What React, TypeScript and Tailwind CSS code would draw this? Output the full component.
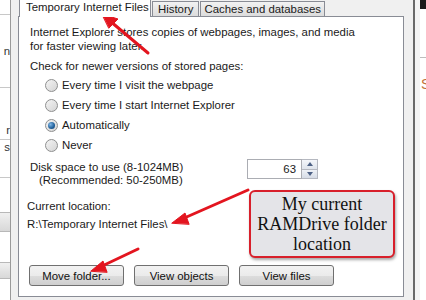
import React from "react";

const ui = { fontFamily: '"Liberation Sans", Arial, sans-serif' };

function Radio({ label, checked }: { label: string; checked?: boolean }) {
  return (
    <div className="h-[20px] flex items-center pl-[15px] gap-[4px]">
      <span className="w-[13px] h-[13px] rounded-full border border-[#8e8f8f] bg-gradient-to-br from-[#f4f4f4] to-[#d4d4d4] flex items-center justify-center">
        {checked && (
          <span className="w-[7px] h-[7px] rounded-full bg-[radial-gradient(circle_at_35%_35%,#7fb6e6,#1f5f99_60%,#173f6b)]" />
        )}
      </span>
      <span>{label}</span>
    </div>
  );
}

function Btn({ children }: { children: React.ReactNode }) {
  return (
    <div className="w-[95px] h-[21px] rounded-[3px] border border-[#707070] bg-[linear-gradient(#f2f2f2_0%,#ebebeb_50%,#dddddd_51%,#cfcfcf_100%)] flex items-center justify-center text-[#111]">
      {children}
    </div>
  );
}

export default function App() {
  return (
    <div className="w-[426px] h-[300px] bg-[#f0f0f0] flex relative overflow-hidden text-[11.4px] leading-[14px] text-[#1a1a1a] whitespace-nowrap" style={ui}>
      {/* window behind, left edge */}
      <div className="w-[11px] h-full bg-white border-r border-[#9a9a9a] flex flex-col text-[#333] overflow-hidden">
        <div className="h-[15px] border-b border-[#c8c8c8]" />
        <div className="h-[73px] border-b border-[#c8c8c8] flex items-center justify-end">n</div>
        <div className="h-[52px] border-b border-[#c8c8c8] flex items-end justify-end pb-[2px]">r</div>
        <div className="h-[38px] border-b border-[#c8c8c8] flex items-start justify-end">s</div>
        <div className="h-[34px]" />
        <div className="h-[20px] bg-gradient-to-b from-[#f0f0f0] to-[#d8d8d8] border-y border-[#b8b8b8]" />
        <div className="h-[30px]" />
        <div className="h-[17px] bg-gradient-to-b from-[#f0f0f0] to-[#d8d8d8] border-y border-[#b8b8b8]" />
      </div>

      {/* dialog body */}
      <div className="w-[402px] h-full pl-[7px] pr-[9px] flex flex-col">
        <div className="h-[16px] flex items-end pl-[1px]">
          <div className="w-[132px] h-[20px] bg-white border border-b-0 border-[#898c95] flex items-end pl-[6px] pb-[3px] -mb-[1px] relative z-10">
            Temporary Internet Files
          </div>
          <div className="h-[15px] px-[5px] ml-[1px] border border-b-0 border-[#898c95] bg-gradient-to-b from-[#f2f2f2] to-[#dcdcdc] flex items-center">
            History
          </div>
          <div className="h-[15px] px-[3px] ml-[1px] border border-b-0 border-[#898c95] bg-gradient-to-b from-[#f2f2f2] to-[#dcdcdc] flex items-center">
            Caches and databases
          </div>
        </div>

        <div className="h-[281px] bg-white border border-[#898c95] flex flex-col pt-[8px] pl-[11px]">
          <p>Internet Explorer stores copies of webpages, images, and media<br />for faster viewing later.</p>
          <p className="mt-[6px]">Check for newer versions of stored pages:</p>
          <div className="mt-[2px] flex flex-col">
            <Radio label="Every time I visit the webpage" />
            <Radio label="Every time I start Internet Explorer" />
            <Radio label="Automatically" checked />
            <Radio label="Never" />
          </div>
          <div className="mt-[5px] flex items-start">
            <div className="w-[217px]">
              <p>Disk space to use (8-1024MB)</p>
              <p className="pl-[9px] -mt-[1px]">(Recommended: 50-250MB)</p>
            </div>
            <div className="flex -mt-[1px]">
              <div className="w-[55px] h-[20px] border border-[#abadb3] bg-white flex items-center justify-end pr-[5px]">63</div>
              <div className="w-[16px] h-[20px] flex flex-col border border-l-0 border-[#b5b8c0]">
                <div className="flex-1 bg-gradient-to-b from-[#f4f6fa] to-[#dfe4ec] border-b border-[#b5b8c0] flex items-center justify-center">
                  <span className="w-0 h-0 border-x-[3px] border-x-transparent border-b-[4px] border-b-[#4d6185]" />
                </div>
                <div className="flex-1 bg-gradient-to-b from-[#eef1f6] to-[#d6dce6] flex items-center justify-center">
                  <span className="w-0 h-0 border-x-[3px] border-x-transparent border-t-[4px] border-t-[#4d6185]" />
                </div>
              </div>
            </div>
          </div>
          <p className="mt-[12px] -ml-[3px]">Current location:</p>
          <p className="mt-[4px] -ml-[3px]">R:\Temporary Internet Files\</p>
          <div className="mt-[34px] flex gap-[10px] -ml-[1px]">
            <Btn>Move folder...</Btn>
            <Btn>View objects</Btn>
            <Btn>View files</Btn>
          </div>
        </div>
      </div>

      {/* window behind, right edge */}
      <div className="w-[13px] h-full flex">
        <div className="w-[2px] h-full border-x border-[#6a6a6a] bg-[#d0d0d0]" />
        <div className="w-[5px] h-full bg-[#f4f4f4]" />
        <div className="w-[6px] h-full flex flex-col bg-white overflow-hidden">
          <div className="h-[9px] bg-[#1a1a1a]" />
          <div className="h-[49px] border-b border-[#bdbdbd]" />
          <div className="mt-[17px] text-[#c0703a] text-[14px] leading-[18px] pl-[1px]">S</div>
        </div>
      </div>

      {/* callout */}
      <div
        className="absolute left-[249px] top-[190px] w-[146px] h-[68px] rounded-[6px] border-2 border-[#d81f2b] bg-[#e4e4e8] shadow-[1px_2px_3px_rgba(0,0,0,0.35)] flex flex-col items-center justify-center text-[18px] leading-[20px] text-[#111]"
        style={{ fontFamily: '"Liberation Serif", "Times New Roman", serif' }}
      >
        <span>My current</span>
        <span>RAMDrive folder</span>
        <span>location</span>
      </div>

      {/* red arrows */}
      <svg className="absolute left-0 top-0" width="426" height="300" viewBox="0 0 426 300">
        <g stroke="#e3151f" strokeWidth="3" strokeLinecap="round" fill="#e3151f">
          <line x1="148" y1="53" x2="110" y2="21" />
          <polygon points="102,14 118,19 109,28" strokeWidth="1" />
          <line x1="248" y1="190" x2="182" y2="219" />
          <polygon points="172,223 185,213 189,224" strokeWidth="1" />
          <line x1="138" y1="249" x2="100" y2="267" />
          <polygon points="91,271 103,261 107,272" strokeWidth="1" />
        </g>
      </svg>
    </div>
  );
}
